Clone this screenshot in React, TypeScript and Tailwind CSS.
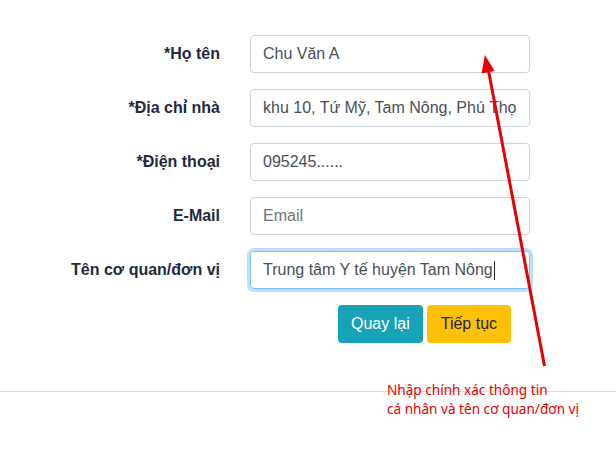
import React from "react";

const rows: { label: React.ReactNode; value: string; placeholder?: string }[] = [
  { label: "*Họ tên", value: "Chu Văn A" },
  {
    label: (
      <>
        *Địa ch<span style={{ fontFamily: '"Roboto", "Noto Sans", sans-serif' }}>ỉ</span> nhà
      </>
    ),
    value: "khu 10, Tứ Mỹ, Tam Nông, Phú Thọ",
  },
  { label: "*Điện thoại", value: "095245......" },
  { label: "E-Mail", value: "", placeholder: "Email" },
];

export default function App() {
  return (
    <div
      className="relative w-[616px] h-[451px] bg-white overflow-hidden"
      style={{ fontFamily: '"Liberation Sans", Arial, sans-serif' }}
    >
      <div className="pt-[35px]">
        {rows.map((r, i) => (
          <div key={i} className="flex items-center mb-4">
            <div className="w-[220px] text-right font-bold text-[16px] text-[#1f2a3c]">{r.label}</div>
            <div className="ml-[30px] w-[280px] h-[38px] border border-[#ced4da] rounded-[4px] flex items-center px-3 text-[16px] whitespace-nowrap overflow-hidden">
              {r.value ? (
                <span className="text-[#495057]">{r.value}</span>
              ) : (
                <span className="text-[#6c757d]">{r.placeholder}</span>
              )}
            </div>
          </div>
        ))}
        <div className="flex items-center mb-4">
          <div className="w-[220px] text-right font-bold text-[16px] text-[#1f2a3c]">Tên cơ quan/đơn vị</div>
          <div className="ml-[30px] w-[280px] h-[38px] border border-[#80bdff] rounded-[4px] flex items-center px-3 text-[16px] whitespace-nowrap overflow-hidden shadow-[0_0_0_3px_rgba(0,123,255,0.25)]">
            <span className="text-[#495057]">Trung tâm Y tế huyện Tam Nông</span>
            <span className="inline-block w-px h-[19px] bg-[#222] ml-px" />
          </div>
        </div>
        <div className="flex pl-[338px] gap-1">
          <div className="h-[38px] px-[13px] rounded-[4px] bg-[#17a2b8] text-white text-[16px] flex items-center">Quay lại</div>
          <div className="h-[38px] px-[14px] rounded-[4px] bg-[#ffc107] text-[#212529] text-[16px] flex items-center">Tiếp tục</div>
        </div>
        <div className="mt-[48px] border-t border-[#dedede]" />
      </div>

      <div
        className="absolute left-[387px] top-[380px] text-[13.6px] leading-[19px] text-[#e60000]"
        style={{ fontFamily: '"Noto Sans", sans-serif' }}
      >
        <div>Nhập chính xác thông tin</div>
        <div>cá nhân và tên cơ quan/đơn vị</div>
      </div>

      <svg className="absolute left-0 top-0 pointer-events-none" width="616" height="451">
        <line x1="544.5" y1="366" x2="488" y2="68" stroke="#e60000" strokeWidth="3" />
        <polygon points="485,55 494.5,71 481.5,73.5" fill="#e60000" />
      </svg>
    </div>
  );
}
